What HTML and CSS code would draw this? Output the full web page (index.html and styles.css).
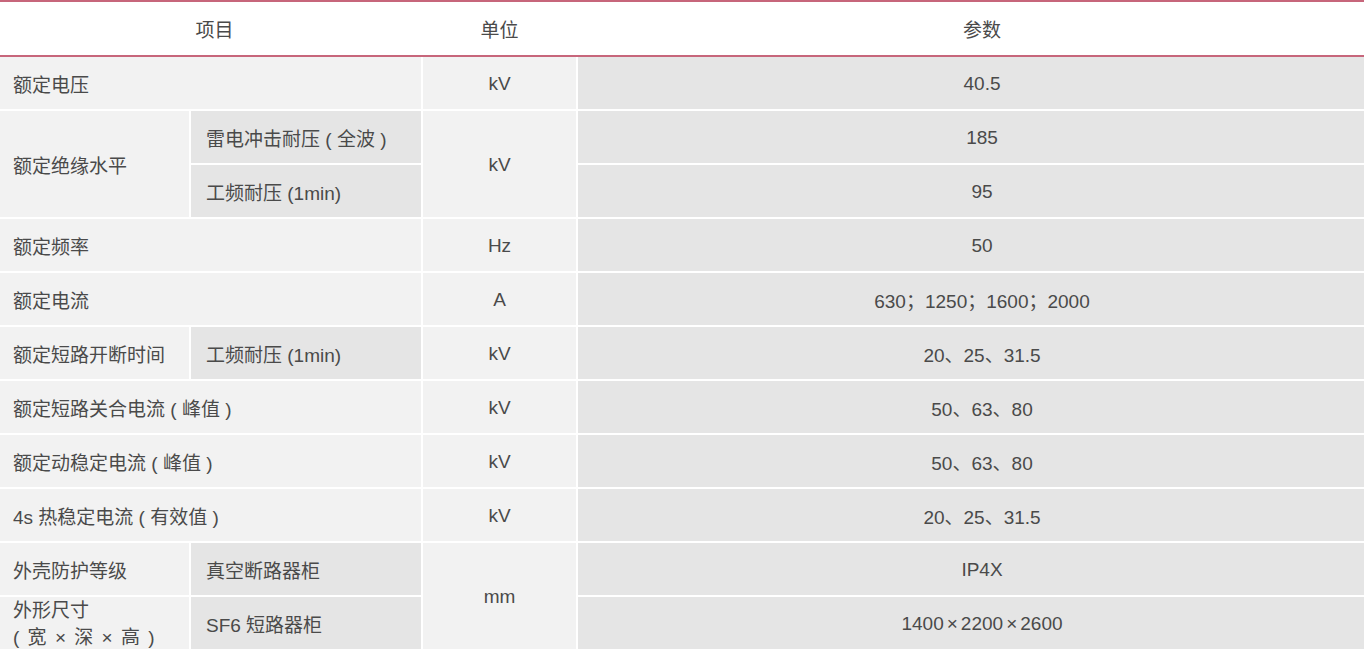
FILE: index.html
```html
<!DOCTYPE html>
<html lang="zh-CN">
<head>
<meta charset="utf-8">
<title>参数表</title>
<link rel="stylesheet" href="styles.css">
</head>
<body>
<div class="table">
  <div class="head">
    <div class="hcell span2">项目</div>
    <div class="hcell">单位</div>
    <div class="hcell val">参数</div>
  </div>
  <div class="body">
    <div class="c name span2">额定电压</div>
    <div class="c unit">kV</div>
    <div class="c val">40.5</div>

    <div class="c name r2">额定绝缘水平</div>
    <div class="c sub">雷电冲击耐压 ( 全波 )</div>
    <div class="c unit r2">kV</div>
    <div class="c val">185</div>
    <div class="c sub">工频耐压 (1min)</div>
    <div class="c val">95</div>

    <div class="c name span2">额定频率</div>
    <div class="c unit">Hz</div>
    <div class="c val">50</div>

    <div class="c name span2">额定电流</div>
    <div class="c unit">A</div>
    <div class="c val">630；1250；1600；2000</div>

    <div class="c name">额定短路开断时间</div>
    <div class="c sub">工频耐压 (1min)</div>
    <div class="c unit">kV</div>
    <div class="c val">20、25、31.5</div>

    <div class="c name span2">额定短路关合电流 ( 峰值 )</div>
    <div class="c unit">kV</div>
    <div class="c val">50、63、80</div>

    <div class="c name span2">额定动稳定电流 ( 峰值 )</div>
    <div class="c unit">kV</div>
    <div class="c val">50、63、80</div>

    <div class="c name span2">4s 热稳定电流 ( 有效值 )</div>
    <div class="c unit">kV</div>
    <div class="c val">20、25、31.5</div>

    <div class="c name">外壳防护等级</div>
    <div class="c sub">真空断路器柜</div>
    <div class="c unit r2">mm</div>
    <div class="c val">IP4X</div>

    <div class="c name two"><span>外形尺寸</span><span class="wide">( 宽 × 深 × 高 )</span></div>
    <div class="c sub">SF6 短路器柜</div>
    <div class="c val">1400<span class="times">×</span>2200<span class="times">×</span>2600</div>
  </div>
</div>
</body>
</html>
```
FILE: styles.css
```css
html, body {
  margin: 0;
  padding: 0;
  background: #ffffff;
}
body {
  font-family: "Liberation Sans", "Noto Sans CJK SC", sans-serif;
  font-size: 19px;
  color: #4a4a4a;
  overflow: hidden;
}
.table {
  width: 1364px;
}
.head {
  display: grid;
  grid-template-columns: 189px 230px 153px 786px;
  column-gap: 2px;
  height: 53px;
  border-top: 2px solid #c7667b;
  border-bottom: 2px solid #c7667b;
  background: #ffffff;
}
.hcell {
  display: flex;
  align-items: center;
  justify-content: center;
}
.head .span2 {
  padding-left: 8px;
}
.span2 {
  grid-column: span 2;
}
.body {
  display: grid;
  grid-template-columns: 189px 230px 153px 786px;
  grid-auto-rows: 52px;
  gap: 2px;
  background: #ffffff;
}
.c {
  display: flex;
  align-items: center;
  padding-top: 1px;
}
.name {
  background: #f2f2f2;
  padding-left: 13px;
}
.sub {
  background: #e5e5e5;
  padding-left: 15px;
}
.unit {
  background: #f2f2f2;
  justify-content: center;
}
.val {
  justify-content: center;
  padding-left: 22px;
}
.body .val {
  background: #e5e5e5;
}
.r2 {
  grid-row: span 2;
}
.two {
  flex-direction: column;
  align-items: flex-start;
  justify-content: center;
  line-height: 27px;
  padding-top: 2px;
}
.wide {
  letter-spacing: 0.5px;
  word-spacing: 2px;
}
.times {
  margin: 0 3px;
}
```
